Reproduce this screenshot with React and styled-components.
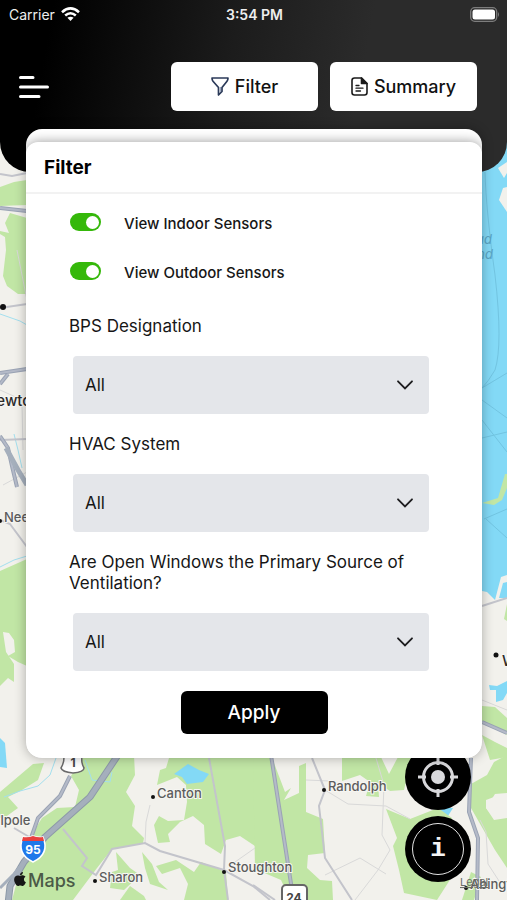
import React, { useState } from 'react';
import styled, { createGlobalStyle } from 'styled-components';
import { FaApple } from 'react-icons/fa';

const GlobalStyle = createGlobalStyle`
  * {
    box-sizing: border-box;
  }

  body {
    margin: 0;
    background: #f2f1ec;
    font-family: Inter, 'Liberation Sans', sans-serif;
    color: #161616;
  }
`;

const yesNo = ['All', 'Yes', 'No'];

const fields = [
  { id: 'bps', label: 'BPS Designation', options: ['All', 'Elementary', 'Middle', 'High'] },
  { id: 'hvac', label: 'HVAC System', options: yesNo },
  { id: 'windows', label: 'Are Open Windows the Primary Source of Ventilation?', options: yesNo },
];

const woods = [
  // left edge
  'M0 187 L14 182 L27 180 L27 205 L0 206Z',
  'M10 213 L27 218 L27 294 L18 294 L7 286 L3 276 L6 250 L5 237 L0 234 L0 231 L9 233 L5 223Z',
  'M0 571 L27 559 L27 666 L18 662 L8 656 L15 652 L14 640 L9 633 L3 632 L6 652 L14 664 L14 682 L8 678 L0 686Z',
  'M0 792 L33 764 L44 763 L38 780 L22 790 L8 797 L18 808 L4 818 L0 818Z',
  // bottom left
  'M85 755 L134 755 L135 775 L126 792 L135 806 L132 826 L144 838 L143 843 L112 849 L97 868 L73 900 L12 900 L20 870 L32 834 L42 818 L57 808 L75 807 L79 790 L71 776Z',
  'M142 852 L152 864 L159 882 L168 890 L150 884 L145 868Z',
  'M116 852 L118 870 L112 872 L110 888 L124 890 L140 875 L130 868Z',
  'M160 770 L166 768 L169 758 L255 755 L255 846 L240 836 L226 840 L221 854 L205 844 L204 825 L193 816 L180 822 L168 834 L170 842 L158 843 L154 825 L159 816 L168 821 L184 820 L187 802 L186 785 L177 777 L157 785Z',
  'M156 866 L176 860 L194 872 L201 862 L226 872 L228 900 L184 900 L188 884 L180 868 L162 874Z',
  'M120 900 L130 886 L144 896 L146 900Z',
  // bottom right
  'M253 755 L271 755 L285 792 L291 788 L284 800 L299 793 L299 766 L306 763 L306 812 L323 819 L325 853 L308 855 L307 868 L320 880 L332 881 L333 900 L290 900 L281 880 L255 869Z',
  'M342 757 L381 757 L389 774 L398 757 L412 757 L404 790 L390 791 L378 783 L379 797 L366 796 L370 782 L360 775 L342 781Z',
  'M386 809 L410 819 L438 808 L452 818 L446 850 L455 872 L437 900 L404 893 L399 870 L393 846 L397 838Z',
  'M471 784 L487 775 L494 762 L507 755 L507 793 L495 794 L486 808 L494 820 L507 818 L507 868 L495 850 L479 822 L471 808Z',
  'M471 872 L481 877 L474 900 L462 900Z',
  // right edge
  'M507 604 L504 619 L507 621Z',
  'M482 706 L495 707 L507 718 L507 735 L482 722Z',
  'M482 735 L495 742 L507 748 L507 757 L490 760Z',
  'M505 474 L507 474 L507 488 L502 500 L494 505 L482 503 L498 498Z',
];

const water = [
  'M482 150 L507 140 L507 575 L501 577 L495 600 L487 592 L482 591Z',
  'M503 583 L507 582 L507 598 L499 598Z',
  'M489 685 L497 686 L507 681 L507 693 L503 700 L496 702 L496 690 L490 690Z',
  'M174 774 L188 764 L199 770 L209 774 L203 782 L187 784 L182 777Z',
  'M0 738 L5 743 L7 768 L0 767Z',
  'M440 808 L453 808 L448 816 L441 815Z',
];

const shore = [
  'M498 168 L507 162 L507 173 L504 178Z',
  'M503 188 L507 187 L507 212 L499 200Z',
  'M486 800 L494 797 L498 806 L492 815 L486 808Z',
];

const minorRoads = [
  'M0 174 L12 176 L27 173',
  'M0 308 L27 304',
  'M0 520 L10 524 L27 547',
  'M0 440 L27 439',
  'M63 829 L87 858 L82 866 L96 875 L112 849 L145 843 L160 851 L224 870 L253 886 L270 900',
  'M312 758 L325 790 L319 806 L325 858 L352 900',
  'M209 758 L225 846 L224 870 L228 900',
  'M253 885 L275 900',
  'M14 828 L31 838',
  'M482 606 L507 598',
];

const faintRoads = [
  'M376 758 L384 785 L382 835 L390 850 L378 870 L355 900',
  'M145 843 L146 822 L150 805',
  'M325 790 L348 804 L386 806 L410 819',
  'M480 820 L486 832 L488 864 L501 884',
  'M325 875 L360 858 L386 874',
  'M306 780 L330 781',
  'M235 862 L255 848',
  'M0 390 L27 402',
  'M22 405 L23 450',
  'M3 485 L27 472',
  'M17 250 L27 300',
  'M482 700 L507 710',
];

const highways = [
  'M0 208 L27 211',
  'M0 373 L27 369',
  'M0 384 L8 374',
  'M0 436 L8 448 L12 466 L17 487',
  'M482 722 L507 733',
  'M271 755 L292 890',
  'M70 776 L60 796 L38 818 L31 838',
  'M471 758 L469 812 L478 838 L477 900',
];

const streams = [
  'M0 314 L20 321 L27 325',
  'M14 434 L18 450 L22 468',
  'M0 567 L14 560 L27 556',
  'M56 758 L50 775 L38 786 L20 791 L4 797',
  'M85 760 L92 780 L110 782 L112 772',
];

const ferries = [
  'M485 172 Q486 210 495 275 Q503 345 495 370 Q488 382 482 388',
  'M482 388 L507 373',
  'M482 400 L507 418',
  'M482 420 L507 452',
  'M482 438 L507 432',
  'M484 519 L507 509',
  'M486 519 L507 538',
];

const towns = [
  { name: 'Canton', x: 157, y: 798, dot: [153, 797] },
  { name: 'Randolph', x: 328, y: 791, dot: [324, 790] },
  { name: 'Sharon', x: 99, y: 882, dot: [95, 881] },
  { name: 'Stoughton', x: 228, y: 872, dot: [224, 872] },
  { name: 'Abington', x: 470, y: 889, dot: [466, 888] },
  { name: 'Needham', x: 4, y: 522, dot: [0, 521] },
  { name: 'alpole', x: -7, y: 825 },
];

const Paths = ({ list, ...rest }) => (
  <g {...rest}>
    {list.map((d) => <path key={d} d={d} />)}
  </g>
);

const MapView = () => (
  <MapSvg viewBox="0 0 507 900" preserveAspectRatio="xMidYMid slice" aria-label="Map">
    <rect width="507" height="900" fill="#f2f1ec" />
    <Paths list={water} fill="#83d9f6" />
    <Paths list={woods} fill="#c1e6a5" />
    <Paths list={shore} fill="#f2f1ec" />
    <path d={water[3]} fill="#83d9f6" />
    <Paths list={streams} fill="none" stroke="#a3dfee" strokeWidth="1" />
    <Paths list={ferries} fill="none" stroke="#72c4e1" strokeWidth="1" />
    <Paths list={faintRoads} fill="none" stroke="#d9d9d9" strokeWidth="1" />
    <Paths list={minorRoads} fill="none" stroke="#c3c4cb" strokeWidth="2" />
    <Paths list={highways} fill="none" stroke="#9aa3b4" strokeWidth="4" />
    <Paths list={highways} fill="none" stroke="#b4bac8" strokeWidth="2" />
    <g fill="none" strokeLinejoin="round">
      <path d="M118 755 L90 797 L45 837 L24 862 L10 886 L8 904" stroke="#8d99a8" strokeWidth="7" />
      <path d="M118 755 L90 797 L45 837 L24 862 L10 886 L8 904" stroke="#a5afbc" strokeWidth="5" />
      <path d="M24 862 L14 874 L0 888" stroke="#a5afbc" strokeWidth="3" />
      <path d="M6 448 L18 470 L27 485" stroke="#a5afbc" strokeWidth="5" />
    </g>

    {/* route shields */}
    <path d="M64 757 H82 Q81 763 84 768 Q84 772 73 773 Q62 772 61 768 Q64 763 64 757Z" fill="#fff" stroke="#6a6a6a" strokeWidth="1.5" />
    <RouteText x="73" y="767" fill="#444">1</RouteText>
    <path d="M23 837 Q28 838 33 836 Q38 838 43 837 Q50 854 33 862 Q16 854 23 837Z" fill="#1f78ea" stroke="#fff" strokeWidth="1.5" />
    <path d="M23 837 Q28 838 33 836 Q38 838 43 837 L44 841 H22Z" fill="#e8413f" />
    <RouteText x="33" y="854" fill="#fff">95</RouteText>
    <rect x="282" y="885" width="25" height="24" rx="4" fill="#fff" stroke="#666" strokeWidth="2" />
    <RouteText x="294" y="902" fill="#444">24</RouteText>

    {towns.map(({ name, x, y, dot }) => (
      <g key={name}>
        {dot && <circle cx={dot[0]} cy={dot[1]} r="2" fill="#111" />}
        <TownText x={x} y={y}>{name}</TownText>
      </g>
    ))}
    <circle cx="3" cy="307" r="3" fill="#111" />
    <circle cx="496" cy="655" r="2.500" fill="#111" />
    <CityText x="-15" y="406">Newton</CityText>
    <CityText x="502" y="666">Weymouth</CityText>
    <SeaText x="492" y="244">Broad</SeaText>
    <SeaText x="493" y="259">Sound</SeaText>
    <LegalText x="460" y="886">Legal</LegalText>
    <g fill="#4b5a47">
      <FaApple x="12" y="871" width="17" height="18" />
      <MapsText x="28" y="887">Maps</MapsText>
    </g>
  </MapSvg>
);

const WifiIcon = () => (
  <svg width="19" height="15" viewBox="0 0 19 15" fill="none" stroke="#fff" strokeWidth="2.6">
    <path d="M1 5.2 Q9.500 -2.400 18 5.200" />
    <path d="M4.200 8.500 Q9.500 4 14.800 8.500" />
    <path d="M9.500 14 L6.400 10.800 Q9.500 8.600 12.600 10.800Z" fill="#fff" stroke="none" />
  </svg>
);

const BatteryIcon = () => (
  <svg width="30" height="15" viewBox="0 0 30 15">
    <rect x="0.700" y="0.700" width="26" height="13.600" rx="4" fill="none" stroke="#7d7d7d" strokeWidth="1.300" />
    <rect x="2.500" y="2.500" width="22.500" height="10" rx="2.500" fill="#fff" />
    <path d="M28 5 Q30 7.500 28 10Z" fill="#7d7d7d" />
  </svg>
);

const FunnelIcon = () => (
  <svg width="18" height="19" viewBox="0 0 18 19" fill="none" stroke="#2b3a59" strokeWidth="1.700" strokeLinejoin="round">
    <path d="M1 1 H17 Q17 3 16 4.200 L11 10.500 V14.500 L7.500 18 V10.500 L2 4.200 Q1 3 1 1Z" />
    <path d="M9.500 10 V15" stroke="#9aa5bd" strokeWidth="1" />
  </svg>
);

const DocumentIcon = () => (
  <svg width="17" height="19" viewBox="0 0 17 19" fill="none" stroke="#1b1b1b" strokeWidth="1.600" strokeLinecap="round">
    <path d="M10.500 1 H3.500 Q1 1 1 3.500 V15.500 Q1 18 3.500 18 H13.500 Q16 18 16 15.500 V6.500Z" />
    <path d="M10.500 1 V6.500 H16Z" fill="#1b1b1b" strokeLinejoin="round" />
    <path d="M5 8.500 H8 M5 11.200 H12 M5 14 H9.500" strokeWidth="1.300" />
  </svg>
);

const MenuIcon = () => (
  <svg width="31" height="24" viewBox="0 0 31 24" stroke="#fff" strokeWidth="3" strokeLinecap="round">
    <path d="M2.500 2.500 H15 M2.500 12 H29.500 M2.500 21.500 H21" />
  </svg>
);

const ChevronIcon = () => (
  <svg width="16" height="10" viewBox="0 0 16 10" fill="none" stroke="#1d1d1f" strokeWidth="1.800" strokeLinecap="round">
    <path d="M1 1.300 L8 8.500 L15 1.300" />
  </svg>
);

const LocateIcon = () => (
  <svg width="40" height="40" viewBox="0 0 40 40" fill="none" stroke="#d9d9dc">
    <circle cx="20" cy="20" r="14.500" strokeWidth="3" />
    <circle cx="20" cy="20" r="7" fill="#d9d9dc" stroke="none" />
    <path d="M20 0 V8 M20 32 V40 M0 20 H8 M32 20 H40" strokeWidth="3" />
  </svg>
);

const Toggle = ({ id, label }) => {
  const [on, setOn] = useState(true);

  return (
    <ToggleRow>
      <Switch id={id} type="checkbox" checked={on} onChange={() => setOn(!on)} />
      <ToggleLabel htmlFor={id}>{label}</ToggleLabel>
    </ToggleRow>
  );
};

const SelectField = ({ id, label, options }) => (
  <Field>
    <FieldLabel htmlFor={id}>{label}</FieldLabel>
    <SelectWrap>
      <Select id={id} defaultValue="All">
        {options.map((option) => <option key={option}>{option}</option>)}
      </Select>
      <SelectArrow><ChevronIcon /></SelectArrow>
    </SelectWrap>
  </Field>
);

const App = () => (
  <Screen>
    <GlobalStyle />
    <MapView />
    <MapButtons>
      <RoundButton type="button" aria-label="My location"><LocateIcon /></RoundButton>
      <RoundButton type="button" aria-label="Information"><InfoRing>i</InfoRing></RoundButton>
    </MapButtons>

    <Header>
      <StatusBar>
        <Carrier>Carrier <WifiIcon /></Carrier>
        <Clock>3:54 PM</Clock>
        <Battery><BatteryIcon /></Battery>
      </StatusBar>
      <Toolbar>
        <MenuButton type="button" aria-label="Menu"><MenuIcon /></MenuButton>
        <ToolbarButton type="button"><FunnelIcon />Filter</ToolbarButton>
        <ToolbarButton type="button"><DocumentIcon />Summary</ToolbarButton>
      </Toolbar>
    </Header>

    <Sheet>
      <Card>
        <CardTitle>Filter</CardTitle>
        <Form onSubmit={(e) => e.preventDefault()}>
          <ToggleList>
            <Toggle id="indoor" label="View Indoor Sensors" />
            <Toggle id="outdoor" label="View Outdoor Sensors" />
          </ToggleList>
          <FieldList>
            {fields.map((field) => <SelectField key={field.id} {...field} />)}
          </FieldList>
          <ApplyButton type="submit">Apply</ApplyButton>
        </Form>
      </Card>
    </Sheet>
  </Screen>
);

const Screen = styled.div`
  position: relative;
  min-height: 100vh;
  overflow: hidden;
`;

const MapSvg = styled.svg`
  position: absolute;
  inset: 0;
  width: 100%;
  height: 100%;
`;

const TownText = styled.text`
  font-size: 13px;
  font-weight: 500;
  fill: #5c5c5c;
  stroke: #f6f6f2;
  stroke-width: 2px;
  paint-order: stroke;
`;

const CityText = styled(TownText)`
  font-size: 15px;
  fill: #2b2b2b;
`;

const SeaText = styled.text`
  font-size: 13px;
  font-style: italic;
  text-anchor: end;
  fill: #5aa5c4;
`;

const RouteText = styled.text`
  font-size: 12px;
  font-weight: 700;
  text-anchor: middle;
`;

const LegalText = styled.text`
  font-size: 11px;
  fill: #6b6f68;
  text-decoration: underline;
`;

const MapsText = styled.text`
  font-size: 18px;
  font-weight: 500;
`;

const MapButtons = styled.div`
  position: absolute;
  right: 36px;
  bottom: 18px;
  display: flex;
  flex-direction: column;
  gap: 6px;
`;

const RoundButton = styled.button`
  display: flex;
  align-items: center;
  justify-content: center;
  width: 66px;
  height: 66px;
  padding: 0;
  border: 0;
  border-radius: 50%;
  background: #000;
`;

const InfoRing = styled.span`
  width: 52px;
  height: 52px;
  border: 1px solid #e4e4e4;
  border-radius: 50%;
  color: #f4f4f4;
  font: bold 26px/50px 'Liberation Mono', monospace;
`;

const Header = styled.header`
  position: relative;
  padding-bottom: 61px;
  border-radius: 0 0 30px 30px;
  background: linear-gradient(100deg, #000 10%, #1c1c1c 45%, #2b2b2b 70%);
`;

const StatusBar = styled.div`
  display: grid;
  grid-template-columns: 1fr auto 1fr;
  align-items: center;
  height: 28px;
  padding: 0 7px 0 9px;
  color: #eee;
  font-size: 14px;
`;

const Carrier = styled.span`
  display: flex;
  align-items: center;
  gap: 6px;
`;

const Clock = styled.span`
  font-weight: 600;
`;

const Battery = styled.span`
  display: flex;
  justify-content: flex-end;
`;

const Toolbar = styled.nav`
  display: flex;
  align-items: center;
  gap: 12px;
  padding: 34px 30px 0 18px;
`;

const MenuButton = styled.button`
  display: flex;
  margin-right: auto;
  padding: 0;
  border: 0;
  background: none;
`;

const ToolbarButton = styled.button`
  display: flex;
  align-items: center;
  justify-content: center;
  gap: 6px;
  width: 147px;
  height: 49px;
  padding: 0;
  border: 0;
  border-radius: 6px;
  background: #fff;
  color: #111;
  font: 500 18px Inter, sans-serif;
`;

const Sheet = styled.main`
  position: relative;
  margin: -43px 25px 0 26px;
  padding-top: 13px;
  border-radius: 16px;
  background: #fff;
  box-shadow: 0 0 12px rgba(0, 0, 0, 0.3);
  overflow: hidden;
`;

const Card = styled.section`
  border-radius: 12px;
  background: #fff;
  box-shadow: 0 0 12px rgba(0, 0, 0, 0.4);
`;

const CardTitle = styled.h1`
  margin: 0;
  padding: 2px 18px 0;
  border-bottom: 2px solid #f2f2f2;
  color: #000;
  font-size: 19px;
  font-weight: 700;
  line-height: 48px;
`;

const Form = styled.form`
  display: flex;
  flex-direction: column;
  padding: 12px 53px 24px 43px;
`;

const ToggleList = styled.div`
  display: flex;
  flex-direction: column;
  gap: 17px;
  padding-left: 1px;
`;

const ToggleRow = styled.div`
  display: flex;
  align-items: center;
  gap: 23px;
  height: 32px;
`;

const Switch = styled.input`
  appearance: none;
  display: flex;
  align-items: center;
  width: 31px;
  height: 18px;
  margin: 0;
  padding: 0 2px;
  border-radius: 9px;
  background: ${({ checked }) => (checked ? '#35b80a' : '#c4c4c4')};

  &::after {
    content: '';
    width: 13px;
    height: 13px;
    margin-left: ${({ checked }) => (checked ? 'auto' : '0')};
    border-radius: 50%;
    background: #fff;
  }
`;

const ToggleLabel = styled.label`
  padding-top: 2px;
  font-size: 15px;
  font-weight: 500;
`;

const FieldList = styled.div`
  display: flex;
  flex-direction: column;
  gap: 20px;
  margin-top: 29px;
`;

const Field = styled.div`
  display: flex;
  flex-direction: column;
  gap: 19px;
`;

const FieldLabel = styled.label`
  font-size: 17px;
  line-height: 21px;
`;

const SelectWrap = styled.div`
  display: grid;
  align-items: center;
  margin-left: 4px;
`;

const Select = styled.select`
  appearance: none;
  grid-area: 1 / 1;
  height: 58px;
  padding: 0 12px;
  border: 0;
  border-radius: 4px;
  background: #e4e6ea;
  color: #161616;
  font: 17px Inter, sans-serif;
`;

const SelectArrow = styled.span`
  display: flex;
  grid-area: 1 / 1;
  justify-self: end;
  margin-right: 16px;
  pointer-events: none;
`;

const ApplyButton = styled.button`
  align-self: center;
  width: 147px;
  height: 43px;
  margin: 20px 0 0 10px;
  border: 0;
  border-radius: 6px;
  background: #000;
  color: #fff;
  font: 500 19px Inter, sans-serif;
`;

export default App;
